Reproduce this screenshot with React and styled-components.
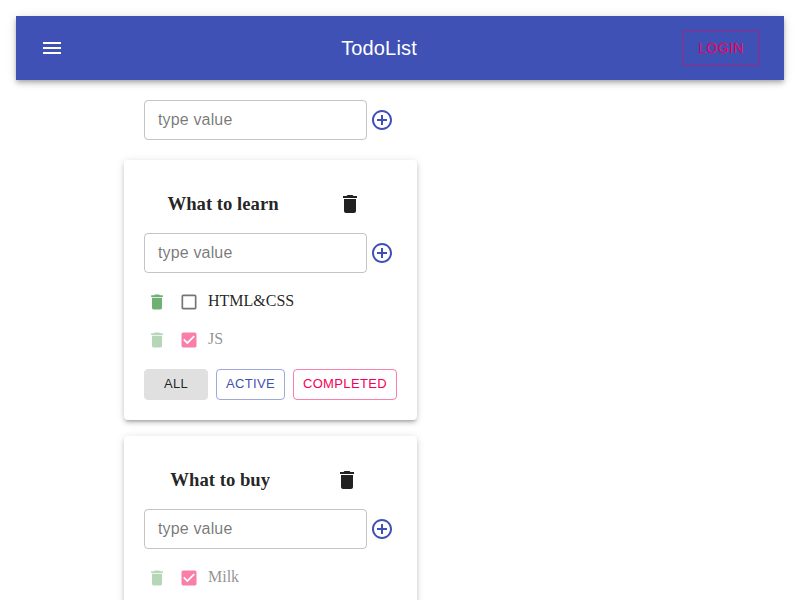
import React from 'react';
import styled, { createGlobalStyle } from 'styled-components';

const GlobalStyle = createGlobalStyle`
  * { box-sizing: border-box; }
  html, body { margin: 0; padding: 0; }
  body { background: #fff; color: rgba(0, 0, 0, 0.87); overflow: hidden; }
`;

const sans = '"Liberation Sans", Arial, sans-serif';
const serif = '"Liberation Serif", "Times New Roman", serif';

const Page = styled.div`
  height: 600px;
  padding: 16px;
  overflow: hidden;
`;

const AppBar = styled.header`
  display: flex;
  align-items: center;
  justify-content: space-between;
  height: 64px;
  padding: 0 24px;
  color: #fff;
  background: #3f51b5;
  box-shadow: 0 2px 4px -1px rgba(0, 0, 0, 0.2), 0 4px 5px 0 rgba(0, 0, 0, 0.14),
    0 1px 10px 0 rgba(0, 0, 0, 0.12);
`;

const IconButton = styled.button`
  display: flex;
  flex: none;
  padding: ${(p) => p.$pad ?? 3}px;
  margin: 0 0 0 ${(p) => p.$shift ?? 0}px;
  border: 0;
  background: none;
  color: ${(p) => p.$color ?? 'inherit'};
`;

const BarTitle = styled.h6`
  margin: 0;
  font: 400 20px/32px ${sans};
  letter-spacing: 0.15px;
`;

const LoginButton = styled.button`
  height: 36px;
  width: 78px;
  padding: 0;
  border: 1px solid rgba(245, 0, 87, 0.5);
  border-radius: 4px;
  background: none;
  color: #f50057;
  font: 400 14px/24px ${sans};
  letter-spacing: 0.4px;
`;

const Main = styled.main`
  display: flex;
  flex-direction: column;
  align-items: flex-start;
  gap: 16px;
  padding: 20px 0 0 108px;
`;

const AddForm = styled.div`
  display: flex;
  align-items: center;
  width: 253px;
`;

const TopForm = styled.div`
  margin: 0 20px 4px;
`;

const Field = styled.input`
  flex: 1;
  min-width: 0;
  height: 40px;
  padding: 0 13px;
  border: 1px solid rgba(0, 0, 0, 0.23);
  border-radius: 4px;
  background: none;
  font: 400 16px/19px ${sans};
  letter-spacing: 0.15px;
  &::placeholder { color: rgba(0, 0, 0, 0.54); opacity: 1; }
`;

const Card = styled.section`
  width: 293px;
  min-height: 260px;
  flex: none;
  padding: 20px;
  border-radius: 4px;
  background: #fff;
  box-shadow: 0 3px 3px -2px rgba(0, 0, 0, 0.2), 0 3px 4px 0 rgba(0, 0, 0, 0.14),
    0 1px 8px 0 rgba(0, 0, 0, 0.12);
`;

const CardHead = styled.div`
  display: flex;
  align-items: center;
  justify-content: space-around;
  height: 48px;
  margin-bottom: 5px;
`;

const CardTitle = styled.h3`
  margin: 0;
  font: 700 18.72px/22px ${serif};
`;

const TaskList = styled.div`
  padding: 10px 0;
`;

const Task = styled.div`
  display: flex;
  align-items: center;
  height: 38px;
  opacity: ${(p) => (p.$done ? 0.5 : 1)};
`;

const TaskText = styled.span`
  margin: 0 0 2px 6px;
  font: 400 16px/18px ${serif};
`;

const Filters = styled.div`
  display: flex;
  gap: 8px;
`;

const FilterButton = styled.button`
  width: ${(p) => p.$width}px;
  height: 31px;
  padding: 0 0 2px;
  border: 1px solid ${(p) => p.$border};
  border-radius: 4px;
  background: ${(p) => p.$fill ?? 'transparent'};
  color: ${(p) => p.$color};
  font: 400 13px/23px ${sans};
  letter-spacing: 0.37px;
`;

const Svg = styled.svg`
  display: block;
  width: ${(p) => p.$size}px;
  height: ${(p) => p.$size}px;
  fill: currentColor;
`;

const paths = {
  menu: 'M3 18h18v-2H3v2zm0-5h18v-2H3v2zm0-7v2h18V6H3z',
  add: 'M13 7h-2v4H7v2h4v4h2v-4h4v-2h-4V7zm-1-5C6.48 2 2 6.48 2 12s4.48 10 10 10 10-4.48 10-10S17.52 2 12 2zm0 18c-4.41 0-8-3.59-8-8s3.59-8 8-8 8 3.59 8 8-3.59 8-8 8z',
  trash: 'M6 19c0 1.1.9 2 2 2h8c1.1 0 2-.9 2-2V7H6v12zM19 4h-3.5l-1-1h-5l-1 1H5v2h14V4z',
  unchecked: 'M19 5v14H5V5h14m0-2H5c-1.1 0-2 .9-2 2v14c0 1.1.9 2 2 2h14c1.1 0 2-.9 2-2V5c0-1.1-.9-2-2-2z',
  checked: 'M19 3H5c-1.11 0-2 .9-2 2v14c0 1.1.89 2 2 2h14c1.11 0 2-.9 2-2V5c0-1.1-.89-2-2-2zm-9 14l-5-5 1.41-1.41L10 14.17l7.59-7.59L19 8l-9 9z',
};

const Icon = ({ name, size = 24 }) => (
  <Svg $size={size} viewBox="0 0 24 24" aria-hidden="true">
    <path d={paths[name]} />
  </Svg>
);

const AddItem = () => (
  <AddForm>
    <Field placeholder="type value" />
    <IconButton $color="#3f51b5" aria-label="Add"><Icon name="add" /></IconButton>
  </AddForm>
);

const lists = [
  { title: 'What to learn', tasks: [['HTML&CSS', false], ['JS', true]], filters: true },
  { title: 'What to buy', tasks: [['Milk', true]] },
];

const TodoCard = ({ title, tasks, filters }) => (
  <Card>
    <CardHead>
      <CardTitle>{title}</CardTitle>
      <IconButton $pad={12} aria-label="Delete list"><Icon name="trash" /></IconButton>
    </CardHead>
    <AddItem />
    <TaskList>
      {tasks.map(([text, done]) => (
        <Task key={text} $done={done}>
          <IconButton $color="#6fb172" aria-label="Delete task"><Icon name="trash" size={20} /></IconButton>
          <IconButton
            $shift={6}
            $color={done ? '#f50057' : 'rgba(0, 0, 0, 0.54)'}
            role="checkbox"
            aria-checked={done}
          >
            <Icon name={done ? 'checked' : 'unchecked'} size={20} />
          </IconButton>
          <TaskText>{text}</TaskText>
        </Task>
      ))}
    </TaskList>
    {filters && (
      <Filters>
        <FilterButton $width={64} $border="#e0e0e0" $fill="#e0e0e0" $color="rgba(0, 0, 0, 0.87)">ALL</FilterButton>
        <FilterButton $width={69} $border="rgba(63, 81, 181, 0.5)" $color="#3f51b5">ACTIVE</FilterButton>
        <FilterButton $width={104} $border="rgba(245, 0, 87, 0.5)" $color="#f50057">COMPLETED</FilterButton>
      </Filters>
    )}
  </Card>
);

export default function App() {
  return (
    <Page>
      <GlobalStyle />
      <AppBar>
        <IconButton $pad={12} $shift={-12} aria-label="Menu"><Icon name="menu" /></IconButton>
        <BarTitle>TodoList</BarTitle>
        <LoginButton>LOGIN</LoginButton>
      </AppBar>
      <Main>
        <TopForm><AddItem /></TopForm>
        {lists.map((list) => <TodoCard key={list.title} {...list} />)}
      </Main>
    </Page>
  );
}
